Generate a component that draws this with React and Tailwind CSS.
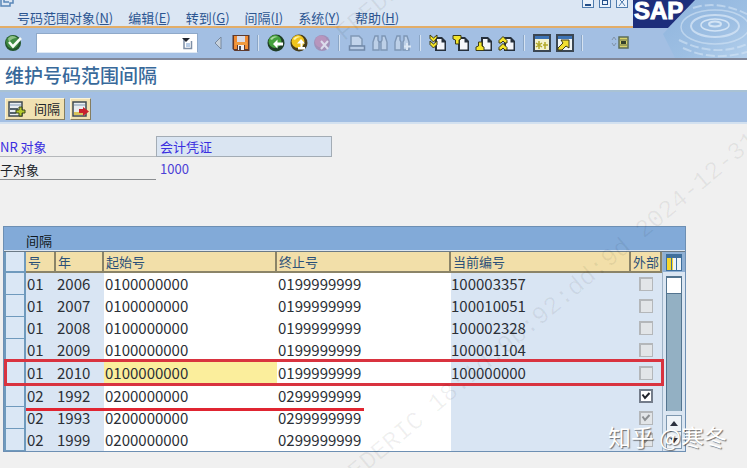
import React from "react";

const menus = [
  ["号码范围对象", "N"],
  ["编辑", "E"],
  ["转到", "G"],
  ["间隔", "I"],
  ["系统", "Y"],
  ["帮助", "H"],
];

const rows = [
  { no: "01", year: "2006", from: "0100000000", to: "0199999999", cur: "100003357" },
  { no: "01", year: "2007", from: "0100000000", to: "0199999999", cur: "100010051" },
  { no: "01", year: "2008", from: "0100000000", to: "0199999999", cur: "100002328" },
  { no: "01", year: "2009", from: "0100000000", to: "0199999999", cur: "100001104" },
  { no: "01", year: "2010", from: "0100000000", to: "0199999999", cur: "100000000", marked: true },
  { no: "02", year: "1992", from: "0200000000", to: "0299999999", cur: "", ext: true, open: true, underlined: true },
  { no: "02", year: "1993", from: "0200000000", to: "0299999999", cur: "", ext: true },
  { no: "02", year: "1999", from: "0200000000", to: "0299999999", cur: "", ext: true },
];

function ToolButton({ label, children, disabled }) {
  return (
    <button type="button" aria-label={label} disabled={disabled} className="flex h-5 w-[23px] shrink-0 items-center justify-center">
      <svg width="18" height="18" viewBox="0 0 18 18" fill="none">
        {children}
      </svg>
    </button>
  );
}

function Separator() {
  return <span className="mx-[5px] h-4 w-0.5 shrink-0 border-l border-[#8ba6c6] bg-[#d5e2f1]" />;
}

function Page() {
  return (
    <>
      <path d="M6 3h7l4 4v10H6z" fill="#26303c" />
      <path d="M8 5h4.500v3.500h3v7H8z" fill="#f4f6fa" />
    </>
  );
}

function Enter() {
  return (
    <svg width="20" height="20" viewBox="0 0 20 20" fill="none">
      <circle cx="9" cy="10" r="8" fill="#23552c" />
      <circle cx="8.500" cy="9" r="6.500" fill="#3f8a42" />
      <path d="M4 5.500Q8 1 13 5Q8 5 5 9z" fill="#8ec087" />
      <path d="M5 9l4 4.500L17 5" stroke="#f8fbf5" strokeWidth="2.600" />
    </svg>
  );
}

function TickBox({ checked, open, label }) {
  return (
    <span className="relative grid size-[14px] place-items-center">
      <input
        type="checkbox"
        aria-label={label}
        defaultChecked={checked}
        disabled={!open}
        className={
          open
            ? "peer col-start-1 row-start-1 size-[14px] appearance-none border-2 border-[#737c8a] bg-white"
            : "peer col-start-1 row-start-1 size-[14px] appearance-none border-2 border-r border-b border-[#b4b7ba] bg-[#e2e5e8]"
        }
      />
      <svg width="10" height="10" viewBox="0 0 10 10" className="pointer-events-none col-start-1 row-start-1 hidden peer-checked:block">
        <path d="M1.500 3.500L4 7L8.500 2" fill="none" stroke={open ? "#20242c" : "#8c8f92"} strokeWidth="2" />
      </svg>
    </span>
  );
}

function Header() {
  return (
    <header className="flex">
      <div className="flex min-w-0 flex-1 flex-col">
        <div className="flex h-2 items-start justify-between overflow-hidden bg-[#dbe6f3] pr-[5px]">
          <svg width="16" height="8" viewBox="0 0 16 8" fill="none" stroke="#5a86b8" strokeWidth="1.500">
            <path d="M1 0v6h9V3h3V0M4 0v2h5" />
          </svg>
          <div className="flex gap-[5px]">
            <button type="button" aria-label="最小化" className="flex h-2 w-3 border border-t-0 border-[#4f7cae] bg-[#eaf2fb]">
              <span className="mt-1 ml-0.5 h-0.5 w-1.5 bg-[#24508a]" />
            </button>
            <button type="button" aria-label="最大化" className="flex h-2 w-3 border border-t-0 border-[#4f7cae] bg-[#eaf2fb]">
              <span className="ml-0.5 h-[5px] w-1.5 border border-[#24508a]" />
            </button>
            <button type="button" aria-label="关闭" className="flex h-2 w-3 border border-t-0 border-[#4f7cae] bg-[#eaf2fb]">
              <svg width="10" height="7" viewBox="0 0 10 7" stroke="#4f7cae">
                <path d="M2 6L5 2L8 6M3 0L5 2L7 0" fill="none" />
              </svg>
            </button>
          </div>
        </div>
        <nav className="flex h-[18px] gap-[15px] bg-[#dbe6f3] pl-[17px] text-[13px] leading-[20px] whitespace-nowrap text-[#2c5591]">
          {menus.map(([name, key]) => (
            <button key={key} type="button">
              {name}(<u>{key}</u>)
            </button>
          ))}
        </nav>
        <div className="flex h-8 items-center border-t-2 border-[#e2ad68] bg-[#a3bfe3]">
          <button type="button" aria-label="回车" className="ml-1 w-8 shrink-0">
            <Enter />
          </button>
          <div className="flex h-5 w-[162px] shrink-0 items-center border border-[#8fa9c9] border-b-[#dfe9f4] bg-white pr-1">
            <input type="text" aria-label="命令" className="min-w-0 flex-1 bg-transparent px-1 text-[13px] outline-none" />
            <svg width="11" height="13" viewBox="0 0 11 13" fill="none">
              <path d="M2 2v9.500h7.500V4" stroke="#7f90a6" strokeWidth="1.500" />
              <path d="M0 1h8L4 5z" fill="#20242c" />
              <path d="M4 6h4v4H4z" fill="#b9cde6" />
            </svg>
          </div>
          <span className="w-2 shrink-0" />
          <ToolButton label="历史">
            <path d="M12 3v12L6 9z" fill="#c7d1dc" stroke="#77889e" />
          </ToolButton>
          <ToolButton label="保存">
            <path d="M0.500 1h17v16h-15l-2-2z" fill="#5f3a2c" />
            <path d="M2 2h3v13H2zM13 2h3v13h-3z" fill="#ef8a32" />
            <path d="M5 2h8v6H5z" fill="#d9dbe6" />
            <path d="M3 8h12v3H3z" fill="#f09a3e" />
            <path d="M6 11h6v5H6z" fill="#eef0f5" />
            <path d="M7 12h2v4H7z" fill="#4a4a58" />
          </ToolButton>
          <Separator />
          <ToolButton label="返回">
            <circle cx="9" cy="9" r="8.500" fill="#1f3d26" />
            <circle cx="8" cy="7.500" r="6.500" fill="#44a03c" />
            <path d="M3 5q3-4 8-2q-4 0-6 3z" fill="#a9d89f" />
            <path d="M6 10l4.500-4.500V8.500H16v3h-5.500V14.500z" fill="#fff" />
          </ToolButton>
          <ToolButton label="退出">
            <circle cx="9" cy="9" r="8.500" fill="#473d1b" />
            <circle cx="8" cy="7.500" r="6.500" fill="#f0c51e" />
            <path d="M3 5q3-4 8-2q-4 0-6 3z" fill="#fff3a4" />
            <path d="M11 5l4 4.500h-2.500V13H15v2.500H8V13h2.500V9.500H7z" fill="#fff" />
          </ToolButton>
          <ToolButton label="取消">
            <circle cx="9" cy="9" r="8" fill="#a190b8" />
            <circle cx="8" cy="7.500" r="6" fill="#b795bd" />
            <path d="M8 7l7 8M15 7l-7 8" stroke="#dcdcec" strokeWidth="2" />
          </ToolButton>
          <Separator />
          <ToolButton label="打印" disabled>
            <path d="M3 2h8l3 3v7H3z" fill="#c2d4eb" stroke="#8199b7" strokeWidth="1.500" />
            <path d="M1.500 12h15v4h-15z" fill="#b7cbe5" stroke="#7189a9" strokeWidth="1.500" />
          </ToolButton>
          <ToolButton label="查找" disabled>
            <path d="M4 2h3v4l1 2v8H2V8zM11 2h3l2 6v8h-6V8l1-2z" fill="#bdd0e8" stroke="#7e96b5" strokeWidth="1.400" />
            <path d="M8 8h2" stroke="#7e96b5" strokeWidth="2" />
          </ToolButton>
          <ToolButton label="查找下一个" disabled>
            <path d="M3 2h3v4l1 2v8H1V8zM10 2h3l2 6v8H9V8l1-2z" fill="#bdd0e8" stroke="#7e96b5" strokeWidth="1.400" />
            <path d="M13 9v7M10 12.500h7" stroke="#dce7f4" strokeWidth="2" />
          </ToolButton>
          <Separator />
          <ToolButton label="首页">
            <Page />
            <path d="M1 1l3.500 3L8 1v3L4.500 8L1 4.500zM1 7l3.500 3L8 7v3.500L4.500 14L1 10.500z" fill="#f4e52a" stroke="#3d3b16" />
          </ToolButton>
          <ToolButton label="上一页">
            <Page />
            <path d="M1 1.500h8V5L7 6v4H3.500V6L1 5z" fill="#f4e52a" stroke="#3d3b16" />
          </ToolButton>
          <ToolButton label="下一页">
            <Page />
            <path d="M3.500 8h3.500v4l2 1v3.500H1V13l2.500-1z" fill="#f4e52a" stroke="#3d3b16" />
          </ToolButton>
          <ToolButton label="末页">
            <Page />
            <path d="M1 6.500l4-4l4 4V9H7L5 7L3 9H1zM1 13.500l4-4l4 4V16H7l-2-2l-2 2H1z" fill="#f4e52a" stroke="#3d3b16" />
          </ToolButton>
          <Separator />
          <ToolButton label="新会话">
            <path d="M1 1h16v16H1z" fill="#f4f3cf" stroke="#3b4652" strokeWidth="2" />
            <path d="M2 2h14v3H2z" fill="#3d73b5" />
            <path d="M6 7v8M3 9l6 4M9 9l-6 4M12 8v7M10 11h5" stroke="#b2a92a" strokeWidth="1.500" />
          </ToolButton>
          <ToolButton label="快捷方式">
            <path d="M1 1h16v16H1z" fill="#f1f4f4" stroke="#3b4652" strokeWidth="2" />
            <path d="M2 2h14v3H2z" fill="#3d73b5" />
            <path d="M2 14l5-5l-2-3h8v8l-3-2l-4 4H2z" fill="#f2df30" stroke="#3d3b16" />
          </ToolButton>
          <Separator />
          <span className="min-w-0 flex-1" />
          <button type="button" aria-label="定制本地布局" className="mr-1 shrink-0">
            <svg width="18" height="14" viewBox="0 0 18 14" fill="none">
              <path d="M1 4L3 1L5 4M1 7l2 3l2-3" stroke="#8294aa" />
              <path d="M8 1h9v11H8z" fill="#d9d36a" stroke="#5c6d59" strokeWidth="1.500" />
              <path d="M9 4h7M9 9h7" stroke="#65704a" />
              <path d="M10 5h5v3h-5z" fill="#34402c" />
            </svg>
          </button>
        </div>
      </div>
      <svg width="114" height="58" viewBox="0 0 114 58" className="shrink-0" role="img" aria-label="SAP">
        <defs>
          <linearGradient id="water" x1="0" y1="0" x2="1" y2="1">
            <stop offset="0" stopColor="#8fb4dd" />
            <stop offset="0.600" stopColor="#9dbfe3" />
            <stop offset="1" stopColor="#b4d0ec" />
          </linearGradient>
        </defs>
        <path d="M0 0h114v58H0z" fill="#a3bfe3" />
        <path d="M62 0h52v58H42L30 34z" fill="url(#water)" />
        <g fill="none" stroke="#d3e4f5">
          <ellipse cx="82" cy="24" rx="6" ry="2.500" strokeWidth="2" />
          <ellipse cx="82" cy="25" rx="14" ry="6" strokeWidth="1.500" />
          <ellipse cx="82" cy="26" rx="24" ry="11" strokeWidth="2" opacity="0.800" />
          <ellipse cx="82" cy="27" rx="34" ry="17" strokeWidth="1.500" opacity="0.600" />
          <path d="M46 40Q82 58 114 44M50 48Q80 62 114 52M60 8Q84 0 114 14" strokeWidth="2" opacity="0.600" strokeDasharray="9 3" />
        </g>
        <path d="M0 0h62L35 28H0z" fill="#1d2e7b" />
        <text x="1" y="19" fill="#fff" fontFamily="'Liberation Sans', Arial, sans-serif" fontWeight="700" fontSize="24" stroke="#fff">
          SAP
        </text>
      </svg>
    </header>
  );
}

const headCell =
  "border-r-2 border-b-2 border-[#8b8468] bg-[#f2dfa9] p-0 pl-0.5 text-left align-bottom text-[13px] leading-[18px] font-normal whitespace-nowrap text-[#2b5078]";

function IntervalTable() {
  return (
    <section aria-label="间隔" className="mr-[61px] ml-[3px] border border-[#6d8fb3] bg-[#dae5f2]">
      <h2 className="h-[24px] border-b border-[#dbe6f3] bg-[#82aad8] pt-1 pl-[22px] text-[13px] leading-[20px] text-[#101820]">间隔</h2>
      <div className="flex border-t border-[#6b7a86]">
        <table className="min-w-0 flex-1 table-fixed border-separate border-spacing-0 text-[#2b2f36]">
          <colgroup>
            <col className="w-[22px]" />
            <col className="w-[30px]" />
            <col className="w-[48px]" />
            <col className="w-[173px]" />
            <col className="w-[174px]" />
            <col />
            <col className="w-[31px]" />
          </colgroup>
          <thead>
            <tr className="h-[21px]">
              <th className="border-2 border-t-0 border-[#6f9abd] bg-[#dae7f5] p-0" aria-label="选择" />
              <th className={headCell}>号</th>
              <th className={headCell}>年</th>
              <th className={headCell}>起始号</th>
              <th className={headCell}>终止号</th>
              <th className={headCell}>当前编号</th>
              <th className={headCell}>外部</th>
            </tr>
          </thead>
          <tbody className="text-[15px] leading-[20px]">
            {rows.map((r, i) => (
              <tr key={i} className={r.marked ? "relative h-6" : "relative h-[22px]"}>
                <td className="border-r-2 border-b border-l-2 border-[#6f9abd] bg-[#dae7f5] p-0">
                  {r.marked && <span className="pointer-events-none absolute -top-0.5 -right-0.5 -bottom-px left-0 z-10 border-[3px] border-[#d9333f]" />}
                  {r.underlined && <span className="pointer-events-none absolute bottom-[-4px] left-[22px] z-10 h-[3px] w-[338px] bg-[#e02531]" />}
                </td>
                <td className="bg-[#d9e5f3] p-0 pl-px">{r.no}</td>
                <td className="bg-[#d9e5f3] p-0 pl-px">{r.year}</td>
                <td className={r.marked ? "bg-[#fbee9c] p-0 pl-px" : "bg-white p-0 pl-px"}>{r.from}</td>
                <td className="bg-white p-0 pl-px">{r.to}</td>
                <td className="bg-[#d9e5f3] p-0">{r.cur}</td>
                <td className="bg-[#d9e5f3] p-0 pl-2">
                  <TickBox checked={r.ext} open={r.open} label={`外部 ${r.no} ${r.year}`} />
                </td>
              </tr>
            ))}
          </tbody>
        </table>
        <div className="flex w-[23px] shrink-0 flex-col items-center border-l border-[#9fb4c8] bg-[#dbe6f2]">
          <button type="button" aria-label="配置" className="flex h-5 w-full items-center justify-center bg-[#8fb0d4]">
            <svg width="16" height="17" viewBox="0 0 16 17">
              <path d="M0 0h16v17H0z" fill="#3f6f9c" />
              <path d="M1 4h4v12H1z" fill="#f6d62c" />
              <path d="M6 4h4v12H6zM11 4h4v12h-4z" fill="#eef3f8" />
              <path d="M6 4h1v12H6z" fill="#f6d62c" />
            </svg>
          </button>
          <div className="mt-1 flex w-4 flex-1 flex-col border-x border-t-2 border-[#53748f] bg-[#93b0c3]">
            <span className="h-4 border-b border-[#53748f] bg-white" />
          </div>
          <div className="mt-1 mb-0.5 flex w-4 flex-col border border-[#7e98b0] bg-[#eef3f8]">
            <button type="button" aria-label="向上" className="flex h-4 items-center justify-center border-b border-[#7e98b0]">
              <svg width="8" height="5" viewBox="0 0 8 5"><path d="M4 0l4 5H0z" fill="#2a3140" /></svg>
            </button>
            <button type="button" aria-label="向下" className="flex h-4 items-center justify-center">
              <svg width="8" height="5" viewBox="0 0 8 5"><path d="M4 5l4-5H0z" fill="#2a3140" /></svg>
            </button>
          </div>
        </div>
      </div>
    </section>
  );
}

export default function App() {
  return (
    <div className="relative min-h-screen overflow-hidden bg-[#f0f0f0] font-['Noto_Sans_CJK_SC',sans-serif]">
      <Header />
      <h1 className="h-[34px] border-t-2 border-b-2 border-t-[#81889a] border-b-[#a9c2d4] bg-white pl-[5px] text-[19px] leading-[30px] font-medium text-[#38699a]">
        维护号码范围间隔
      </h1>
      <div className="flex h-8 items-center gap-[5px] border-b-2 border-[#d3e1f0] bg-[#a3bfe3] pt-1 pl-[5px]">
        <button type="button" className="flex h-[22px] w-[60px] items-center gap-2 border border-[#fbf4da] border-r-[#857d60] border-b-[#857d60] bg-[#f0e1b2] pl-0.5 text-[13px] leading-[20px] whitespace-nowrap text-[#20242a]">
          <svg width="18" height="17" viewBox="0 0 18 17" className="shrink-0">
            <path d="M1 1h13v14H1z" fill="#e8edf0" stroke="#3e4950" strokeWidth="1.500" />
            <path d="M2 7h8v2H2zM2 11h6v2H2z" fill="#55636c" />
            <path d="M2 3h11v2H2z" fill="#b4c3d2" />
            <path d="M11 6h3v3h3v3h-3v3h-3v-3H8V9h3z" fill="#b5c92d" stroke="#39451c" />
          </svg>
          间隔
        </button>
        <button type="button" aria-label="删除间隔" className="flex h-[22px] w-[21px] items-center justify-center border border-[#fbf4da] border-r-[#857d60] border-b-[#857d60] bg-[#f0e1b2]">
          <svg width="18" height="17" viewBox="0 0 18 17" className="shrink-0">
            <path d="M1 1h13v14H1z" fill="#e8edf0" stroke="#3e4950" strokeWidth="1.500" />
            <path d="M2 3h11v2H2z" fill="#b4c3d2" />
            <path d="M2 11h10v3H2z" fill="#d8c25a" />
            <path d="M7 8h4V6l6 4.500L11 15v-3H7z" fill="#c8202c" />
          </svg>
        </button>
      </div>

      <form className="pt-3 text-[13px]" onSubmit={(e) => e.preventDefault()}>
        <div className="flex h-[21px]">
          <label htmlFor="nr" className="w-[156px] border-b border-[#b5b8bb] leading-[22px] text-[#3a2ee0]">NR 对象</label>
          <input id="nr" readOnly defaultValue="会计凭证" className="h-[21px] w-[176px] border border-[#a3acb5] bg-[#dae5f2] px-[3px] text-[13px] text-[#3a2ee0] outline-none" />
        </div>
        <div className="flex h-[23px]">
          <label htmlFor="sub" className="w-[156px] border-b border-[#8b8e91] leading-[26px] text-[#20242a]">子对象</label>
          <input id="sub" readOnly defaultValue="1000" className="h-[23px] w-[176px] bg-transparent px-1 text-[13px] text-[#4c3fd6] outline-none" />
        </div>
      </form>

      <main className="pt-[46px]">
        <IntervalTable />
      </main>

      <div aria-hidden="true" className="pointer-events-none absolute top-[482px] left-[329px] z-20 origin-left -rotate-40 font-['Liberation_Mono',monospace] text-[25px] leading-none whitespace-nowrap text-black/6">
        FREDERIC 18:1d:9b:92:dd:9d 2024-12-31
      </div>
      <div aria-hidden="true" className="pointer-events-none absolute top-[24px] left-[340px] z-20 origin-left -rotate-40 font-['Liberation_Mono',monospace] text-[25px] leading-none whitespace-nowrap text-black/6">
        FREDERIC
      </div>
      <div className="pointer-events-none absolute top-[421px] left-[608px] z-20 text-[23px] leading-[30px] whitespace-nowrap text-white [text-shadow:1px_1px_1px_rgba(60,60,60,0.7)]">
        知乎 @寒冬
      </div>
    </div>
  );
}
